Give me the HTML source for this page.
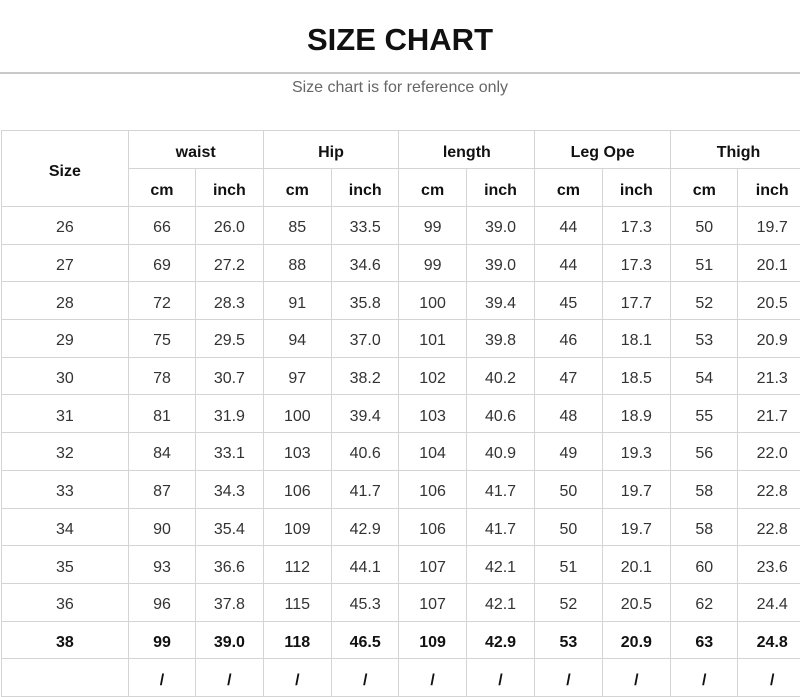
<!DOCTYPE html>
<html><head><meta charset="utf-8"><style>
html,body{margin:0;padding:0;background:#fff;width:800px;height:696px;overflow:hidden;font-family:"Liberation Sans",Arial,sans-serif;}
h1{position:absolute;top:20px;left:0;width:800px;text-align:center;margin:0;font-size:31px;font-weight:bold;color:#111;line-height:40px;}
.hr{position:absolute;top:72px;left:0;width:800px;height:2px;background:#c8c8c8;}
.sub{position:absolute;top:78px;left:0;width:800px;text-align:center;font-size:16px;color:#666;line-height:20px;}
table{position:absolute;top:130px;left:1px;border-collapse:collapse;table-layout:fixed;width:806px;}
td{border:1px solid #d4d4d4;text-align:center;font-size:16px;color:#333;padding:6px 0 0 0;height:30.7px;}
tr.h td{font-weight:bold;color:#111;height:31px;}
tr.b td{font-weight:bold;color:#111;}
</style></head><body>
<h1>SIZE CHART</h1>
<div class="hr"></div>
<div class="sub">Size chart is for reference only</div>
<table>
<colgroup><col style="width:126px"><col style="width:67px"><col style="width:67px"><col style="width:68px"><col style="width:67px"><col style="width:67px"><col style="width:68px"><col style="width:67px"><col style="width:68px"><col style="width:67px"><col style="width:68px"></colgroup>
<tr class="h"><td rowspan="2">Size</td><td colspan="2">waist</td><td colspan="2">Hip</td><td colspan="2">length</td><td colspan="2">Leg Ope</td><td colspan="2">Thigh</td></tr>
<tr class="h"><td>cm</td><td>inch</td><td>cm</td><td>inch</td><td>cm</td><td>inch</td><td>cm</td><td>inch</td><td>cm</td><td>inch</td></tr>
<tr><td>26</td><td>66</td><td>26.0</td><td>85</td><td>33.5</td><td>99</td><td>39.0</td><td>44</td><td>17.3</td><td>50</td><td>19.7</td></tr>
<tr><td>27</td><td>69</td><td>27.2</td><td>88</td><td>34.6</td><td>99</td><td>39.0</td><td>44</td><td>17.3</td><td>51</td><td>20.1</td></tr>
<tr><td>28</td><td>72</td><td>28.3</td><td>91</td><td>35.8</td><td>100</td><td>39.4</td><td>45</td><td>17.7</td><td>52</td><td>20.5</td></tr>
<tr><td>29</td><td>75</td><td>29.5</td><td>94</td><td>37.0</td><td>101</td><td>39.8</td><td>46</td><td>18.1</td><td>53</td><td>20.9</td></tr>
<tr><td>30</td><td>78</td><td>30.7</td><td>97</td><td>38.2</td><td>102</td><td>40.2</td><td>47</td><td>18.5</td><td>54</td><td>21.3</td></tr>
<tr><td>31</td><td>81</td><td>31.9</td><td>100</td><td>39.4</td><td>103</td><td>40.6</td><td>48</td><td>18.9</td><td>55</td><td>21.7</td></tr>
<tr><td>32</td><td>84</td><td>33.1</td><td>103</td><td>40.6</td><td>104</td><td>40.9</td><td>49</td><td>19.3</td><td>56</td><td>22.0</td></tr>
<tr><td>33</td><td>87</td><td>34.3</td><td>106</td><td>41.7</td><td>106</td><td>41.7</td><td>50</td><td>19.7</td><td>58</td><td>22.8</td></tr>
<tr><td>34</td><td>90</td><td>35.4</td><td>109</td><td>42.9</td><td>106</td><td>41.7</td><td>50</td><td>19.7</td><td>58</td><td>22.8</td></tr>
<tr><td>35</td><td>93</td><td>36.6</td><td>112</td><td>44.1</td><td>107</td><td>42.1</td><td>51</td><td>20.1</td><td>60</td><td>23.6</td></tr>
<tr><td>36</td><td>96</td><td>37.8</td><td>115</td><td>45.3</td><td>107</td><td>42.1</td><td>52</td><td>20.5</td><td>62</td><td>24.4</td></tr>
<tr class="b"><td>38</td><td>99</td><td>39.0</td><td>118</td><td>46.5</td><td>109</td><td>42.9</td><td>53</td><td>20.9</td><td>63</td><td>24.8</td></tr>
<tr class="b"><td></td><td>/</td><td>/</td><td>/</td><td>/</td><td>/</td><td>/</td><td>/</td><td>/</td><td>/</td><td>/</td></tr>
</table>
</body></html>
